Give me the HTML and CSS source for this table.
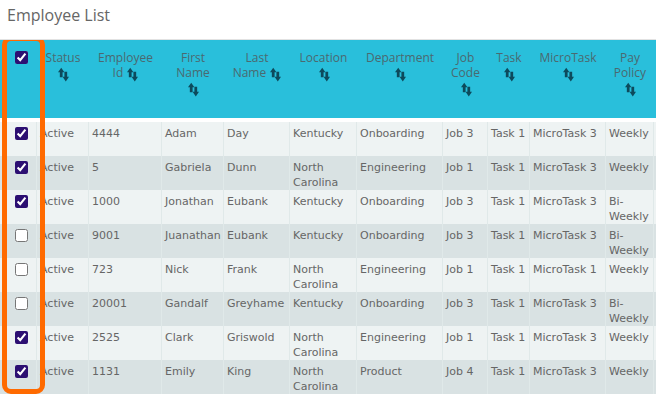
FILE: index.html
```html
<!DOCTYPE html>
<html>
<head>
<meta charset="utf-8">
<link rel="stylesheet" href="styles.css">
</head>
<body>
<h1 class="title">Employee List</h1>
<div class="grid-wrap">
  <table class="grid">
    <colgroup>
      <col class="c-sel"><col class="c-status"><col class="c-id"><col class="c-first"><col class="c-last"><col class="c-loc"><col class="c-dept"><col class="c-job"><col class="c-task"><col class="c-micro"><col class="c-pay"><col class="c-extra">
    </colgroup>
    <thead>
      <tr>
        <th class="sel"><input type="checkbox" class="cb" checked></th>
        <th>Status <svg class="sort" viewBox="0 0 12 16"><path d="M0 5.5 L3.5 0.5 L7 5.5 L5 5.5 L5 11 L2 11 L2 5.5 Z"/><path d="M7 5 L10 5 L10 10.5 L12 10.5 L8.5 15.5 L5 10.5 L7 10.5 Z"/></svg></th>
        <th>Employee Id <svg class="sort" viewBox="0 0 12 16"><path d="M0 5.5 L3.5 0.5 L7 5.5 L5 5.5 L5 11 L2 11 L2 5.5 Z"/><path d="M7 5 L10 5 L10 10.5 L12 10.5 L8.5 15.5 L5 10.5 L7 10.5 Z"/></svg></th>
        <th>First Name <svg class="sort" viewBox="0 0 12 16"><path d="M0 5.5 L3.5 0.5 L7 5.5 L5 5.5 L5 11 L2 11 L2 5.5 Z"/><path d="M7 5 L10 5 L10 10.5 L12 10.5 L8.5 15.5 L5 10.5 L7 10.5 Z"/></svg></th>
        <th>Last Name <svg class="sort" viewBox="0 0 12 16"><path d="M0 5.5 L3.5 0.5 L7 5.5 L5 5.5 L5 11 L2 11 L2 5.5 Z"/><path d="M7 5 L10 5 L10 10.5 L12 10.5 L8.5 15.5 L5 10.5 L7 10.5 Z"/></svg></th>
        <th>Location <svg class="sort" viewBox="0 0 12 16"><path d="M0 5.5 L3.5 0.5 L7 5.5 L5 5.5 L5 11 L2 11 L2 5.5 Z"/><path d="M7 5 L10 5 L10 10.5 L12 10.5 L8.5 15.5 L5 10.5 L7 10.5 Z"/></svg></th>
        <th>Department <svg class="sort" viewBox="0 0 12 16"><path d="M0 5.5 L3.5 0.5 L7 5.5 L5 5.5 L5 11 L2 11 L2 5.5 Z"/><path d="M7 5 L10 5 L10 10.5 L12 10.5 L8.5 15.5 L5 10.5 L7 10.5 Z"/></svg></th>
        <th>Job Code <svg class="sort" viewBox="0 0 12 16"><path d="M0 5.5 L3.5 0.5 L7 5.5 L5 5.5 L5 11 L2 11 L2 5.5 Z"/><path d="M7 5 L10 5 L10 10.5 L12 10.5 L8.5 15.5 L5 10.5 L7 10.5 Z"/></svg></th>
        <th>Task <svg class="sort" viewBox="0 0 12 16"><path d="M0 5.5 L3.5 0.5 L7 5.5 L5 5.5 L5 11 L2 11 L2 5.5 Z"/><path d="M7 5 L10 5 L10 10.5 L12 10.5 L8.5 15.5 L5 10.5 L7 10.5 Z"/></svg></th>
        <th>MicroTask <svg class="sort" viewBox="0 0 12 16"><path d="M0 5.5 L3.5 0.5 L7 5.5 L5 5.5 L5 11 L2 11 L2 5.5 Z"/><path d="M7 5 L10 5 L10 10.5 L12 10.5 L8.5 15.5 L5 10.5 L7 10.5 Z"/></svg></th>
        <th>Pay Policy <svg class="sort" viewBox="0 0 12 16"><path d="M0 5.5 L3.5 0.5 L7 5.5 L5 5.5 L5 11 L2 11 L2 5.5 Z"/><path d="M7 5 L10 5 L10 10.5 L12 10.5 L8.5 15.5 L5 10.5 L7 10.5 Z"/></svg></th>
        <th></th>
      </tr>
    </thead>
    <tbody>
      <tr><td class="sel"><input type="checkbox" class="cb" checked></td><td>Active</td><td>4444</td><td>Adam</td><td>Day</td><td>Kentucky</td><td>Onboarding</td><td>Job 3</td><td>Task 1</td><td>MicroTask 3</td><td>Weekly</td><td></td></tr>
      <tr><td class="sel"><input type="checkbox" class="cb" checked></td><td>Active</td><td>5</td><td>Gabriela</td><td>Dunn</td><td>North Carolina</td><td>Engineering</td><td>Job 1</td><td>Task 1</td><td>MicroTask 3</td><td>Weekly</td><td></td></tr>
      <tr><td class="sel"><input type="checkbox" class="cb" checked></td><td>Active</td><td>1000</td><td>Jonathan</td><td>Eubank</td><td>Kentucky</td><td>Onboarding</td><td>Job 3</td><td>Task 1</td><td>MicroTask 3</td><td>Bi-Weekly</td><td></td></tr>
      <tr><td class="sel"><input type="checkbox" class="cb"></td><td>Active</td><td>9001</td><td>Juanathan</td><td>Eubank</td><td>Kentucky</td><td>Onboarding</td><td>Job 3</td><td>Task 1</td><td>MicroTask 3</td><td>Bi-Weekly</td><td></td></tr>
      <tr><td class="sel"><input type="checkbox" class="cb"></td><td>Active</td><td>723</td><td>Nick</td><td>Frank</td><td>North Carolina</td><td>Engineering</td><td>Job 1</td><td>Task 1</td><td>MicroTask 1</td><td>Weekly</td><td></td></tr>
      <tr><td class="sel"><input type="checkbox" class="cb"></td><td>Active</td><td>20001</td><td>Gandalf</td><td>Greyhame</td><td>Kentucky</td><td>Onboarding</td><td>Job 3</td><td>Task 1</td><td>MicroTask 3</td><td>Bi-Weekly</td><td></td></tr>
      <tr><td class="sel"><input type="checkbox" class="cb" checked></td><td>Active</td><td>2525</td><td>Clark</td><td>Griswold</td><td>North Carolina</td><td>Engineering</td><td>Job 1</td><td>Task 1</td><td>MicroTask 3</td><td>Weekly</td><td></td></tr>
      <tr><td class="sel"><input type="checkbox" class="cb" checked></td><td>Active</td><td>1131</td><td>Emily</td><td>King</td><td>North Carolina</td><td>Product</td><td>Job 4</td><td>Task 1</td><td>MicroTask 3</td><td>Weekly</td><td></td></tr>
    </tbody>
  </table>
  <div class="highlight"></div>
</div>
</body>
</html>
```
FILE: styles.css
```css
html, body {
  margin: 0;
  padding: 0;
  background: #ffffff;
  overflow: hidden;
}
body {
  width: 656px;
  height: 395px;
}
.title {
  margin: 0;
  padding: 4px 7px 0;
  height: 35px;
  box-sizing: border-box;
  font-family: "Open Sans", sans-serif;
  font-weight: 400;
  font-size: 16px;
  line-height: 22px;
  color: #666666;
}
.grid-wrap {
  position: relative;
  width: 656px;
  overflow: hidden;
  border-top: 1px solid #e2e2e2;
  margin-top: 4px;
}
.grid {
  table-layout: fixed;
  border-collapse: separate;
  border-spacing: 0;
  width: 700px;
}
.c-sel { width: 37px; }
.c-status { width: 52px; }
.c-id { width: 73px; }
.c-first { width: 62px; }
.c-last { width: 66px; }
.c-loc { width: 67px; }
.c-dept { width: 86px; }
.c-job { width: 45px; }
.c-task { width: 42px; }
.c-micro { width: 76px; }
.c-pay { width: 48px; }
.c-extra { width: 46px; }

.grid th {
  box-sizing: border-box;
  background: #29bfdb;
  height: 82px;
  padding: 10px 7px 0;
  border-bottom: 4px solid #ffffff;
  vertical-align: top;
  text-align: center;
  font-family: "Open Sans", sans-serif;
  font-weight: 400;
  font-size: 12px;
  line-height: 15px;
  color: #4b6970;
}
.grid th.sel {
  text-align: left;
  padding: 11px 0 0 15px;
}
.sort {
  width: 11px;
  height: 15px;
  vertical-align: -5px;
  margin-left: 1px;
  fill: #0d4a5c;
}
.grid td {
  box-sizing: border-box;
  height: 34px;
  padding: 4px 2px 0 3px;
  vertical-align: top;
  border-right: 1px solid #e0e9e9;
  font-family: "DejaVu Sans", Verdana, sans-serif;
  font-size: 11px;
  line-height: 15px;
  color: #666666;
  overflow: hidden;
}
.grid td.sel {
  padding: 5px 0 0 15px;
}
.grid tbody tr:nth-child(odd) td {
  background: #eef3f3;
}
.grid tbody tr:nth-child(even) td {
  background: #d9e2e3;
}
.cb {
  display: block;
  margin: 0;
  width: 13px;
  height: 13px;
  accent-color: #2c0f72;
}
.highlight {
  position: absolute;
  left: 2px;
  top: -4px;
  width: 43px;
  height: 358px;
  box-sizing: border-box;
  border: 5px solid #ff6a00;
  border-radius: 9px;
  pointer-events: none;
}
```
